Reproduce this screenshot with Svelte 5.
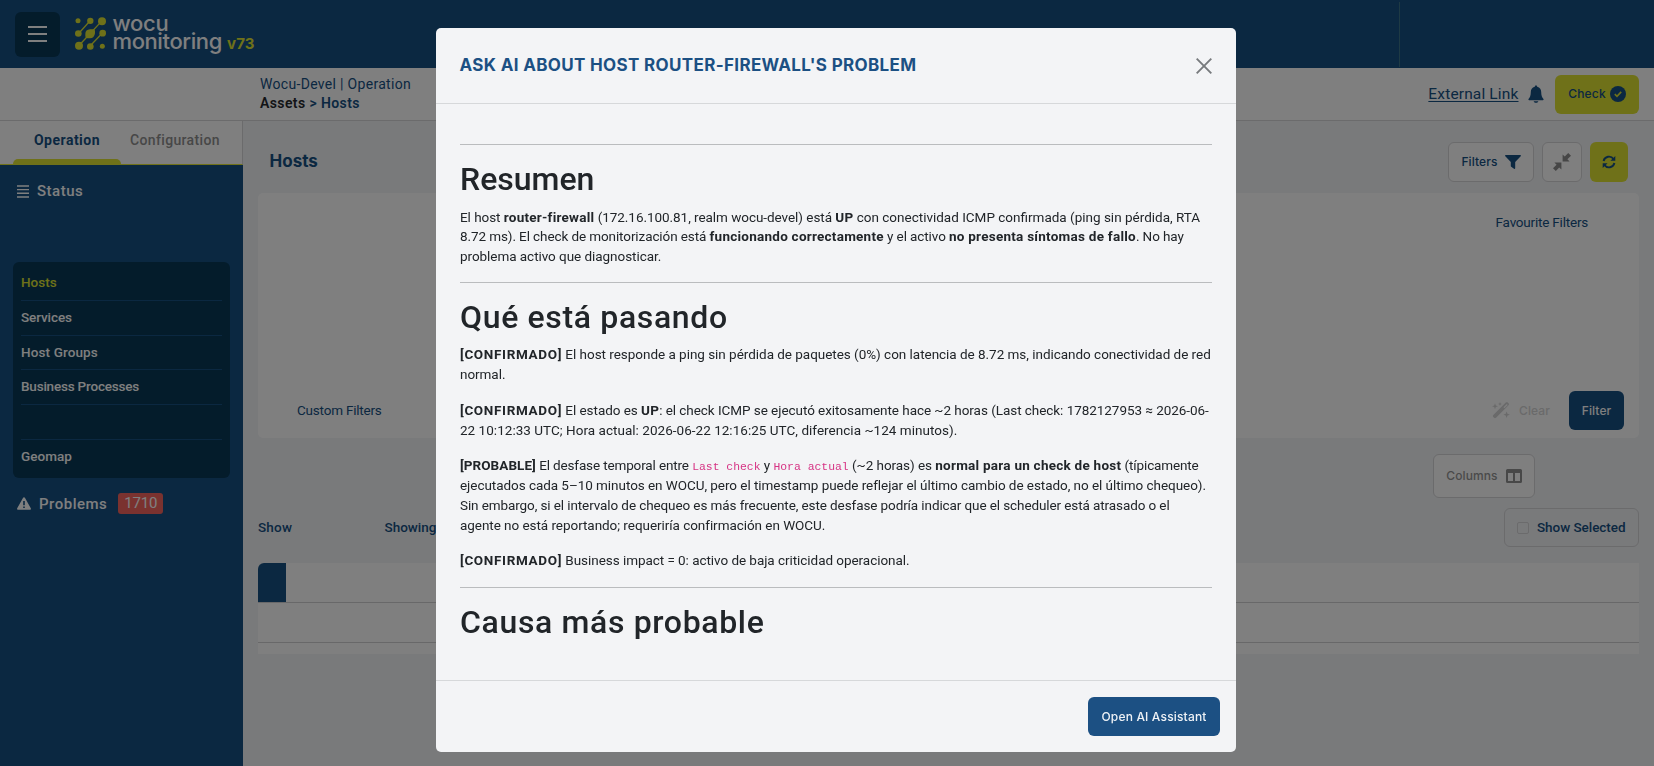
<script>
  const menu = [
    { label: 'Hosts', active: true, ls: 0 },
    { label: 'Services', ls: -0.1 },
    { label: 'Host Groups', ls: 0.12 },
    { label: 'Business Processes', ls: -0.2 },
    { label: '', ls: 0 },
    { label: 'Geomap', ls: 0.05 }
  ];
</script>

<div class="app">
  <header class="topbar">
    <button class="burger" aria-label="Menu"><i></i><i></i><i></i></button>
    <div class="brand">
      <svg class="mark" viewBox="195 38 93 98" width="31" height="33">
        <g stroke="#dee232" stroke-width="4" stroke-linecap="round">
          <path d="M206 87 241 48M207 123 275 50M241 124 278 85" />
        </g>
        <g fill="#dee232">
          <circle cx="204" cy="49" r="7.5" /><circle cx="241" cy="49" r="9.5" /><circle cx="276" cy="50" r="12" />
          <circle cx="205" cy="87" r="10" /><circle cx="278" cy="86" r="10" />
          <path d="M226 88q0-13 14-14h10q6 0 5 6v6q-2 15-15 15h-8q-6 0-6-6z" />
          <circle cx="207" cy="124" r="12" /><circle cx="241" cy="126" r="10" /><circle cx="277" cy="125" r="7.5" />
        </g>
      </svg>
      <div class="words"><span class="w1">wocu</span><span class="w2">monitoring</span></div>
      <span class="ver">v73</span>
    </div>
    <div class="divider"></div>
  </header>

  <div class="subbar">
    <div class="crumbs">
      <div class="c1">Wocu-Devel | Operation</div>
      <div class="c2"><span>Assets</span> &gt; Hosts</div>
    </div>
    <a class="ext" href="#ext">External Link</a>
    <svg class="bell" viewBox="0 0 16 18" width="16" height="18">
      <path d="M8 .4c.8 0 1.2.5 1.2 1.3C12 2.300 13.200 4.500 13.200 7c0 3.600.8 5.200 2.300 7.100.3.600 0 1.100-.6 1.100H1.100c-.6 0-.9-.5-.6-1.100C2 12.200 2.800 10.600 2.800 7c0-2.500 1.200-4.700 4-5.300C6.800.900 7.200.400 8 .400zM5.600 16.200h4.800c-.5 1-1.300 1.500-2.400 1.500s-1.900-.5-2.400-1.500z" fill="#165083" />
    </svg>
    <button class="btn lime check">Check
      <svg viewBox="0 0 16 16" width="16" height="16"><circle cx="8" cy="8" r="8" fill="#165083" /><path d="M4.800 8.200 7 10.300 11.200 5.900" fill="none" stroke="#dee232" stroke-width="1.700" /></svg>
    </button>
  </div>

  <div class="main">
    <aside>
      <nav class="tabs">
        <span class="tab on">Operation</span>
        <span class="tab off">Configuration</span>
      </nav>
      <div class="group status">
        <svg viewBox="0 0 12 13" width="12" height="13"><path d="M0 1h12M0 4.600h12M0 8.300h12M0 12h12" stroke="#fff" stroke-width="1.400" /></svg>
        <span>Status</span>
      </div>
      <ul class="menu">
        {#each menu as m}
          <li class:active={m.active} style="letter-spacing:{m.ls}px">{m.label}</li>
        {/each}
      </ul>
      <div class="group problems">
        <svg viewBox="0 0 14 13" width="14" height="13"><path d="M7 .2c.4 0 .7.2.9.5l5.900 10.500c.4.700-.1 1.500-.9 1.500H1.100c-.8 0-1.300-.8-.9-1.500L6.100.700C6.300.400 6.600.200 7 .200z" fill="#fff" /><path d="M7 4v4.200M7 9.500v1.600" stroke="#165083" stroke-width="1.600" /></svg>
        <span>Problems</span>
        <b class="badge">1710</b>
      </div>
    </aside>

    <section class="content">
      <div class="head">
        <h1>Hosts</h1>
        <div class="tools">
          <button class="btn white filters">Filters
            <svg viewBox="0 0 16 14" width="16" height="14"><path d="M.8 0h14.400c.8 0 1 .8.5 1.300L10.200 7v6.200c0 .7-.7 1-1.200.6L6.200 11.700c-.2-.2-.4-.4-.4-.7V7L.3 1.300C-.2.800 0 0 .800 0z" fill="#165083" /></svg>
          </button>
          <button class="btn white square" aria-label="Compress">
            <svg viewBox="0 0 18 18" width="18" height="18" fill="#8c8c8c"><path d="M9.600 1.400v7h7l-2.200-2.200L18 2.800 15.200 0l-3.400 3.600zM8.400 16.600v-7h-7l2.200 2.200L0 15.200 2.800 18l3.400-3.600z" /></svg>
          </button>
          <button class="btn lime sync" aria-label="Refresh">
            <svg viewBox="0 0 14 14" width="14" height="14"><g fill="none" stroke="#165083" stroke-width="1.900"><path d="M1.600 6A5.500 5.500 0 0 1 11.500 4M12.400 8A5.500 5.500 0 0 1 2.500 10" /></g><path d="M13.300.900v4.900H8.400zM.700 13.100V8.200h4.900z" fill="#165083" /></svg>
          </button>
        </div>
      </div>

      <div class="panel">
        <div class="fav">Favourite Filters</div>
        <div class="panelfoot">
          <span class="custom">Custom Filters</span>
          <span class="clear">
            <svg viewBox="0 0 18 17" width="18" height="17" fill="#d4d4d5"><path d="M13.800.6c.6-.6 1.400-.6 2 0l.7.7c.6.6.6 1.400 0 2L4 15.800c-.6.6-1.400.6-2 0l-.7-.7c-.6-.6-.6-1.400 0-2zM14.800 2l-3.300 3.300.9.900 3.300-3.300z" fill-rule="evenodd" /><path d="M3 1.300 3.800 3.400 6 4.200 3.800 5 3 7.200 2.200 5 0 4.200 2.200 3.400zM14.600 9.400l.9 2.400 2.400.9-2.400.9-.9 2.400-.9-2.400-2.400-.9 2.400-.9zM8 0l.6 1.400 1.400.6-1.400.6L8 4l-.6-1.400L6 2l1.400-.6z" /></svg>
            Clear
          </span>
          <button class="btn navy filter">Filter</button>
        </div>
      </div>

      <div class="colrow">
        <button class="btn white columns">Columns
          <svg viewBox="0 0 16 14" width="16" height="14"><path d="M1.500 0h13A1.500 1.500 0 0 1 16 1.500v11a1.500 1.500 0 0 1-1.500 1.500h-13A1.500 1.500 0 0 1 0 12.500v-11A1.500 1.500 0 0 1 1.500 0zM2 4v8h5V4zM9 4v8h5V4z" fill="#909090" fill-rule="evenodd" /></svg>
        </button>
      </div>
      <div class="showrow">
        <span class="show">Show</span>
        <span class="showing">Showing</span>
        <label class="selected"><i></i>Show Selected</label>
      </div>
      <div class="table">
        <div class="tr"><div class="corner"></div></div>
        <div class="tr"></div>
        <div class="rest"></div>
      </div>
    </section>
  </div>
</div>

<div class="backdrop">
  <div class="modal">
    <div class="mhead">
      <h2>ASK AI ABOUT HOST ROUTER-FIREWALL'S PROBLEM</h2>
      <svg viewBox="0 0 16 16" width="16" height="16"><path d="M.7.700l14.600 14.600M15.300.700.700 15.300" stroke="#777a7d" stroke-width="1.900" /></svg>
    </div>
    <div class="mbody">
      <hr />
      <h3 class="r">Resumen</h3>
      <p class="lead">El host <strong>router-firewall</strong> (172.16.100.81, realm wocu-devel) está <strong>UP</strong> <span class="wide">con conectividad ICMP confirmada (ping sin pérdida, RTA</span><br /><span class="tight">8.72 ms). El check de monitorización está <strong>funcionando correctamente</strong> y el activo <strong>no presenta síntomas de fallo</strong>. No hay</span><br />problema activo que diagnosticar.</p>
      <hr />
      <h3>Qué está pasando</h3>
      <p><strong class="tag">[CONFIRMADO]</strong> <span class="even">El host responde a ping sin pérdida de paquetes (0%) con latencia de 8.72 ms, indicando conectividad de red</span><br />normal.</p>
      <p><strong class="tag">[CONFIRMADO]</strong> El estado es <strong>UP</strong>: el check ICMP se ejecutó exitosamente hace ~2 horas (Last check: 1782127953 ≈ 2026-06-<br /><span class="loose">22 10:12:33 UTC; Hora actual: 2026-06-22 12:16:25 UTC, diferencia ~124 minutos).</span></p>
      <p><strong class="tag2">[PROBABLE]</strong> <span class="tighter">El desfase temporal entre</span> <code>Last check</code> y <code>Hora actual</code> (~2 horas) es <strong>normal para un check de host</strong> <span class="tighter">(típicamente</span><br />ejecutados cada 5–10 minutos en WOCU, pero el timestamp puede reflejar el último cambio de estado, no el último chequeo).<br /><span class="tight">Sin embargo, si el intervalo de chequeo es más frecuente, este desfase podría indicar que el scheduler está atrasado o el</span><br />agente no está reportando; requeriría confirmación en WOCU.</p>
      <p><strong class="tag">[CONFIRMADO]</strong> Business impact = 0: activo de baja criticidad operacional.</p>
      <hr />
      <h3>Causa más probable</h3>
    </div>
    <div class="mfoot"><button class="btn navy open">Open AI Assistant</button></div>
  </div>
</div>

<style>
  :global(body) { background: #f2f4f7; overflow: hidden; }
  * { box-sizing: border-box; }
  .app { height: 766px; width: 1654px; display: flex; flex-direction: column; font-family: Roboto, sans-serif; color: #165083; white-space: nowrap; background: #f2f4f7; }
  svg { display: block; flex: none; }
  button { font: inherit; color: inherit; border: 0; padding: 0; }

  .topbar { height: 68px; flex: none; background: #165083; display: flex; padding-left: 15px; }
  .burger { width: 45px; height: 45px; margin-top: 12px; border-radius: 6px; background: #083856; display: flex; flex-direction: column; align-items: center; justify-content: center; gap: 5px; padding-bottom: 2px; }
  .burger i { width: 19px; height: 2px; background: #fff; }
  .brand { display: flex; padding-left: 15px; width: 1324px; flex: none; }
  .mark { margin-top: 17px; }
  .words { margin-left: 6.500px; display: flex; flex-direction: column; color: #fff; font: 500 22px/17.500px Inter, sans-serif; width: 109.500px; padding-top: 15px; }
  .w1 { letter-spacing: -0.3px; }
  .w2 { letter-spacing: -0.4px; }
  .ver { font: 700 15px/18px Inter, sans-serif; letter-spacing: 0.2px; color: #dee232; margin: 35px 0 0 5px; }
  .divider { width: 1px; height: 65px; margin-top: 2px; margin-left: 15px; background: #3d7488; }

  .subbar { height: 53px; flex: none; background: #fff; border-bottom: 1px solid #d6d6d8; display: flex; padding: 7px 15px 0 260px; }
  .crumbs { flex: 1; font-size: 14px; line-height: 20px; }
  .c1 { letter-spacing: 0.31px; margin-top: -1px; }
  .c2 { font-weight: 600; letter-spacing: 0.4px; margin-top: -1px; }
  .c2 span { color: #26282c; }
  .ext { font-size: 15.500px; line-height: 20px; letter-spacing: 0.15px; color: #165083; text-decoration: underline; text-underline-offset: 2px; margin: 9px 9px 0 0; }
  .bell { margin: 10px 11.500px 0 0; }

  .btn { border-radius: 6px; font: 500 12px/16px Inter, sans-serif; letter-spacing: 0.1px; display: flex; align-items: center; justify-content: center; }
  .lime { background: #dee232; color: #165083; }
  .white { background: #fff; border: 1px solid #d6d6d8; color: #165083; }
  .navy { background: #165083; color: #fff; }
  .check { width: 84px; height: 39px; gap: 4px; letter-spacing: 0.2px; padding-bottom: 1px; }

  .main { flex: 1; display: flex; min-height: 0; }
  aside { width: 243px; flex: none; background: #165083; color: #fff; }
  .tabs { height: 44px; background: #fff; border-right: 1px solid #d6d6d8; border-bottom: 1px solid #dee232; display: flex; padding-left: 13px; font-size: 14px; line-height: 38px; }
  .tab { height: 43px; text-align: center; }
  .on { width: 108px; color: #165083; font-weight: 700; letter-spacing: 0.5px; display: flex; flex-direction: column; }
  .on::after { content: ''; height: 5px; background: #dee232; border-radius: 5px 5px 0 0; }
  .off { color: #8f8f8f; font-weight: 500; letter-spacing: 0.35px; padding-left: 9px; }
  .group { display: flex; align-items: center; padding-left: 17px; font-size: 15px; font-weight: 500; letter-spacing: 0.5px; line-height: 22px; }
  .status { margin-top: 15px; height: 22px; gap: 8px; }
  .menu { list-style: none; margin: 60px 13px 0; padding: 4px 8px; width: 217px; height: 216px; background: #083856; border-radius: 6px; }
  .menu li { height: 34.750px; border-bottom: 1px solid #165083; font-size: 13.500px; font-weight: 500; line-height: 33.500px; }
  .menu li:last-child { border-bottom: 0; }
  .menu .active { color: #dee232; }
  .problems { margin-top: 15px; height: 21px; }
  .problems span { margin-left: 8px; }
  .badge { margin-left: 11px; width: 45px; height: 21px; border-radius: 3px; background: #f4645f; text-align: center; font-weight: 400; line-height: 21px; letter-spacing: -0.2px; }

  .content { flex: 1; padding: 21px 15px 0; display: flex; flex-direction: column; }
  .head { display: flex; justify-content: space-between; height: 51px; padding: 0 11px 0 11.500px; flex: none; }
  h1 { margin: 8px 0 0; font: 700 17px/22px Inter, sans-serif; color: #165083; }
  .tools { display: flex; }
  .filters { width: 86px; height: 40px; gap: 7px; margin-right: 8px; }
  .square { width: 40px; height: 40px; margin-right: 8px; }
  .sync { width: 38px; height: 40px; }
  .panel { height: 245px; flex: none; background: #fff; border-radius: 5px; display: flex; flex-direction: column; justify-content: space-between; font-size: 13.500px; letter-spacing: -0.21px; line-height: 20px; padding: 19px 15px 8px 39px; }
  .fav { align-self: flex-end; margin-right: 36px; }
  .panelfoot { display: flex; align-items: center; height: 39px; }
  .custom { flex: 1; padding-bottom: 2px; }
  .clear { display: flex; align-items: center; gap: 9px; font: 500 12px/16px Inter, sans-serif; letter-spacing: 0.1px; color: #d4d4d5; margin-right: 19px; }
  .filter { width: 55px; height: 39px; }
  .colrow { display: flex; justify-content: flex-end; padding: 16px 104px 0 0; height: 70px; flex: none; }
  .columns { width: 102px; height: 44px; gap: 8px; color: #959595; }
  .showrow { display: flex; height: 39px; flex: none; font-size: 13.500px; font-weight: 500; line-height: 39px; }
  .show { width: 126.500px; letter-spacing: 0.2px; }
  .showing { flex: 1; }
  .selected { width: 135px; border: 1px solid #d6d6d8; border-radius: 6px; display: flex; align-items: center; padding-left: 12px; line-height: 37px; letter-spacing: -0.05px; }
  .selected i { width: 12px; height: 12px; border: 1px solid #d6d6d8; border-radius: 2px; margin-right: 8px; }
  .table { margin-top: 16px; height: 91px; flex: none; background: #fff; border-radius: 6px 0 0 0; overflow: hidden; }
  .tr { height: 40px; border-bottom: 1px solid #d0d0d2; }
  .corner { width: 28px; height: 39px; background: #165083; }
  .rest { height: 11px; }

  .backdrop { position: fixed; inset: 0; background: rgba(0, 0, 0, 0.5); display: flex; justify-content: flex-start; align-items: flex-start; padding: 28px 0 0 436px; }
  .modal { width: 800px; height: 724px; background: #f3f4f6; border-radius: 5px; display: flex; flex-direction: column; font-family: Roboto, sans-serif; color: #212529; white-space: nowrap; }
  .mhead { height: 76px; flex: none; border-bottom: 1px solid #d6d8da; display: flex; justify-content: space-between; padding: 0 24px 0 23.500px; }
  h2 { margin: 26px 0 0; font: 700 17px/22px Inter, sans-serif; letter-spacing: 0.34px; color: #1c5083; }
  .mhead svg { margin-top: 30px; }
  .mbody { flex: 1; min-height: 0; padding: 40px 24px 0; font-size: 13.500px; line-height: 19.850px; letter-spacing: -0.05px; }
  hr { border: 0; height: 1px; background: #babcbe; margin: 0 0 15px; }
  h3 { margin: 0 0 9.200px; font-size: 32px; line-height: 38.400px; font-weight: 500; letter-spacing: 0.65px; }
  .r { letter-spacing: 0; }
  p { margin: 0 0 15.650px; }
  .lead { margin-bottom: 14.700px; }
  strong { font-weight: 700; letter-spacing: 0.25px; }
  .tag { letter-spacing: 0.65px; }
  .tag2 { letter-spacing: 0.05px; }
  .loose { letter-spacing: 0.03px; }
  .wide { letter-spacing: 0px; }
  .even { letter-spacing: -0.03px; }
  .tight { letter-spacing: -0.1px; }
  .tighter { letter-spacing: -0.14px; }
  code { font: 11.400px "Liberation Mono", monospace; letter-spacing: 0; color: #d63384; line-height: 1; }
  .mfoot { height: 72px; flex: none; border-top: 1px solid #d6d8da; display: flex; justify-content: flex-end; padding: 16px 16px 0; }
  .open { width: 132px; height: 39px; background: #1c5083; color: #eef2f6; letter-spacing: 0.17px; }
</style>
